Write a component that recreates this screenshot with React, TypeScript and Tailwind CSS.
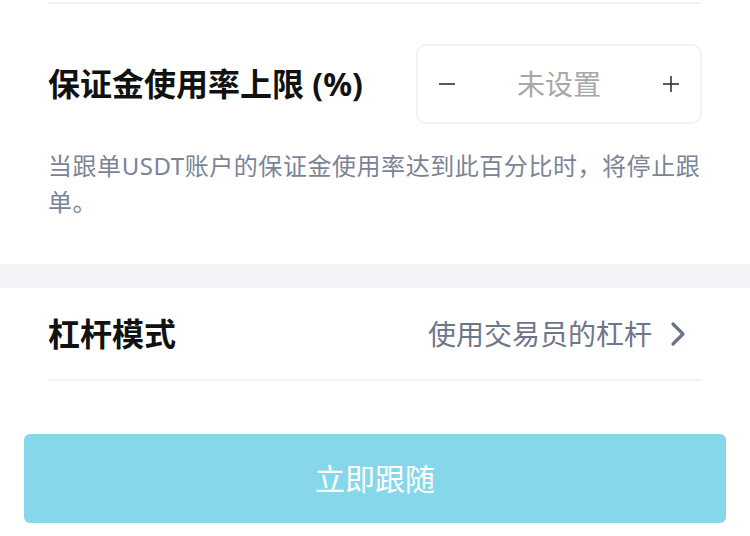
import React from "react";

const font = "font-['Noto_Sans','Noto_Sans_CJK_SC',sans-serif]";

const Stepper: React.FC<{ placeholder: string }> = ({ placeholder }) => (
  <div className="flex items-center justify-between w-[286px] h-[80px] rounded-[10px] border-2 border-[#f2f2f2] px-[18px]">
    <button className="w-[22px] h-[22px] flex items-center justify-center">
      <svg width="18" height="18" viewBox="0 0 18 18">
        <line x1="1" y1="9" x2="17" y2="9" stroke="#333" strokeWidth="1.6" />
      </svg>
    </button>
    <span className="text-[28px] text-[#a8a8a8] leading-none">{placeholder}</span>
    <button className="w-[22px] h-[22px] flex items-center justify-center">
      <svg width="18" height="18" viewBox="0 0 18 18">
        <line x1="1" y1="9" x2="17" y2="9" stroke="#333" strokeWidth="1.6" />
        <line x1="9" y1="1" x2="9" y2="17" stroke="#333" strokeWidth="1.6" />
      </svg>
    </button>
  </div>
);

export default function App() {
  return (
    <div className={`w-[750px] h-[536px] bg-white overflow-hidden ${font}`}>
      {/* top divider */}
      <div className="mx-[48px] mt-[2px] h-[2px] bg-[#f3f3f3]" />

      {/* margin usage limit */}
      <div className="px-[48px] pt-[40px] pb-[44px]">
        <div className="flex items-center justify-between">
          <h3 className="text-[32px] font-bold text-[#111] leading-none">保证金使用率上限 (%)</h3>
          <Stepper placeholder="未设置" />
        </div>
        <p className="mt-[24px] -mr-[8px] text-[24px] leading-[36px] tracking-[0.55px] text-[#7b8497]">
          当跟单USDT账户的保证金使用率达到此百分比时，将停止跟单。
        </p>
      </div>

      <div className="h-[24px] bg-[#f3f4f8]" />

      {/* leverage mode */}
      <div className="mx-[48px] h-[93px] flex items-center justify-between border-b-2 border-[#f3f3f3]">
        <span className="text-[32px] font-bold text-[#111] leading-none">杠杆模式</span>
        <div className="flex items-center gap-[18px]">
          <span className="text-[28px] text-[#6e7689] leading-none">使用交易员的杠杆</span>
          <svg width="16" height="26" viewBox="0 0 16 26" className="mr-[16px]">
            <path d="M3 3 L13 13 L3 23" fill="none" stroke="#6b7386" strokeWidth="3.2" strokeLinecap="round" strokeLinejoin="round" />
          </svg>
        </div>
      </div>

      {/* follow button */}
      <div className="px-[24px] mt-[53px]">
        <button className="w-full h-[89px] rounded-[6px] bg-[#87d7ea] text-white text-[30px] leading-none">
          立即跟随
        </button>
      </div>
    </div>
  );
}
